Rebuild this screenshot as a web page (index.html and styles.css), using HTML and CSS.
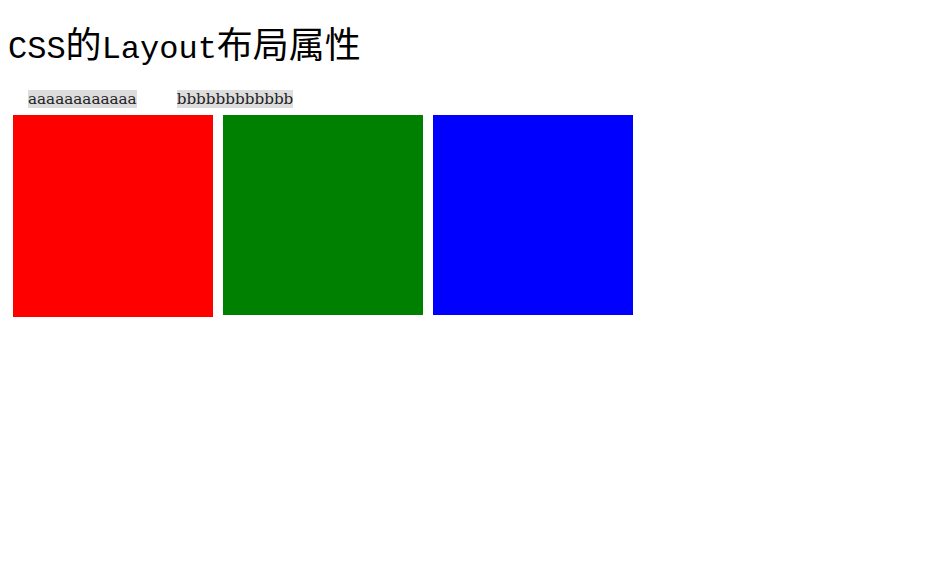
FILE: index.html
```html
<!DOCTYPE html>
<html lang="zh-CN">
<head>
<meta charset="utf-8">
<title>CSS的Layout布局属性</title>
<link rel="stylesheet" href="styles.css">
</head>
<body>
<h1 class="title"><span class="latin">CSS</span>的<span class="latin">Layout</span>布局属性</h1>
<div class="labels">
  <span class="label label-a">aaaaaaaaaaaa</span>
  <span class="label label-b">bbbbbbbbbbbb</span>
</div>
<div class="boxes">
  <div class="box box-red"></div>
  <div class="box box-green"></div>
  <div class="box box-blue"></div>
</div>
</body>
</html>
```
FILE: styles.css
```css
html, body {
  background: #ffffff;
}
body {
  margin: 8px;
  font-family: "DejaVu Serif", "Noto Sans CJK SC", serif;
  color: #000;
}
.title {
  margin: 14px 0 0;
  font-family: "Noto Sans CJK SC", sans-serif;
  font-size: 36px;
  font-weight: 400;
  line-height: 40px;
  white-space: nowrap;
}
.title .latin {
  font-family: "Liberation Mono", monospace;
  font-size: 32px;
}
.labels {
  display: flex;
  gap: 40px;
  padding-left: 20px;
  margin-top: 20px;
}
.label {
  background: #dddddd;
  color: #222;
  font-family: "DejaVu Serif", serif;
  font-size: 15.2px;
  line-height: 18px;
  height: 18px;
}
.boxes {
  display: flex;
  align-items: flex-start;
  gap: 10px;
  margin-top: 7px;
  padding-left: 5px;
}
.box {
  width: 200px;
  height: 200px;
}
.box-red {
  background: #ff0000;
  height: 202px;
}
.box-green {
  background: #008000;
}
.box-blue {
  background: #0000ff;
}
```
